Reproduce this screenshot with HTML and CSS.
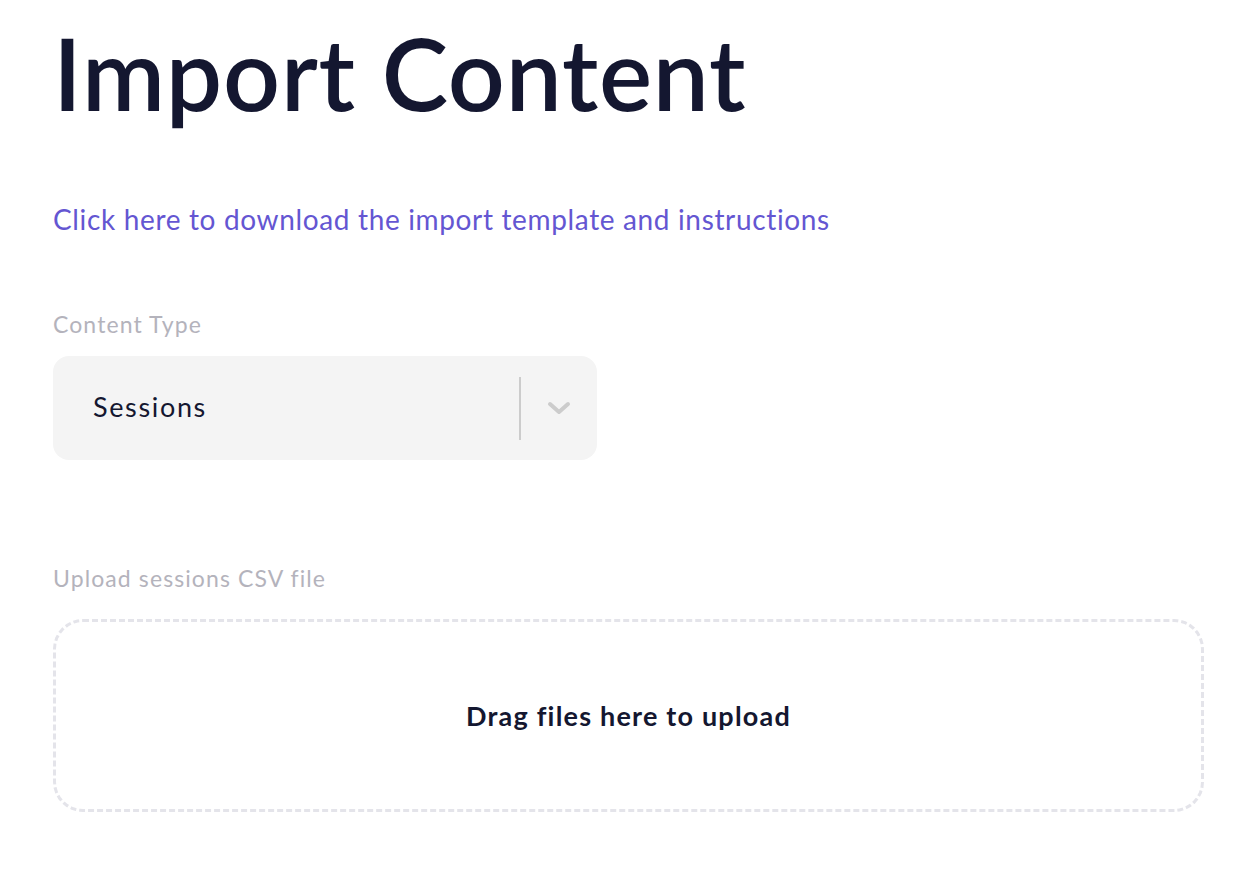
FILE: index.html
```html
<!DOCTYPE html>
<html lang="en">
<head>
<meta charset="utf-8">
<title>Import Content</title>
<link rel="stylesheet" href="styles.css">
</head>
<body>
<main class="page">
  <h1 class="title">Import Content</h1>
  <a class="template-link" href="#">Click here to download the import template and instructions</a>
  <div class="field">
    <label class="field-label">Content Type</label>
    <div class="select">
      <span class="select-value">Sessions</span>
      <span class="select-sep"></span>
      <span class="select-arrow">
        <svg width="26" height="16" viewBox="0 0 26 16"><path d="M4 4 L13 12 L22 4" fill="none" stroke="#cccccc" stroke-width="4" stroke-linecap="round" stroke-linejoin="round"/></svg>
      </span>
    </div>
  </div>
  <div class="field upload-field">
    <label class="field-label">Upload sessions CSV file</label>
    <div class="dropzone">Drag files here to upload</div>
  </div>
</main>
</body>
</html>
```
FILE: styles.css
```css
* { box-sizing: border-box; }
html, body { margin: 0; background: #ffffff; }
body { font-family: Lato, "Open Sans", sans-serif; color: #141730; }
.page { padding: 12px 42px 40px 53px; display: flex; flex-direction: column; }
.title { margin: 0; font-size: 100px; font-weight: 600; line-height: 120px; color: #141730; letter-spacing: 0.8px; }
.template-link { margin-top: 70px; font-size: 28px; line-height: 34px; color: #6456d2; text-decoration: none; letter-spacing: 0.65px; }
.field { display: flex; flex-direction: column; margin-top: 74px; }
.field-label { font-size: 23px; line-height: 28px; color: #b4b3bc; letter-spacing: 1.1px; }
.select { margin-top: 18px; width: 544px; height: 104px; background: #f4f4f4; border-radius: 16px; display: flex; align-items: center; padding: 0 0 4px 40px; }
.select-value { flex: 1; font-size: 27px; color: #141730; letter-spacing: 1.65px; }
.select-sep { width: 2px; height: 63px; background: #cccccc; margin-top: 4px; }
.select-arrow { width: 76px; display: flex; justify-content: center; margin-top: 4px; }
.upload-field { margin-top: 104px; }
.dropzone { margin-top: 27px; height: 193px; border: 3px dashed #e4e4ea; border-radius: 30px; display: flex; align-items: center; justify-content: center; font-size: 27px; font-weight: 700; color: #141730; letter-spacing: 1.2px; }
```
